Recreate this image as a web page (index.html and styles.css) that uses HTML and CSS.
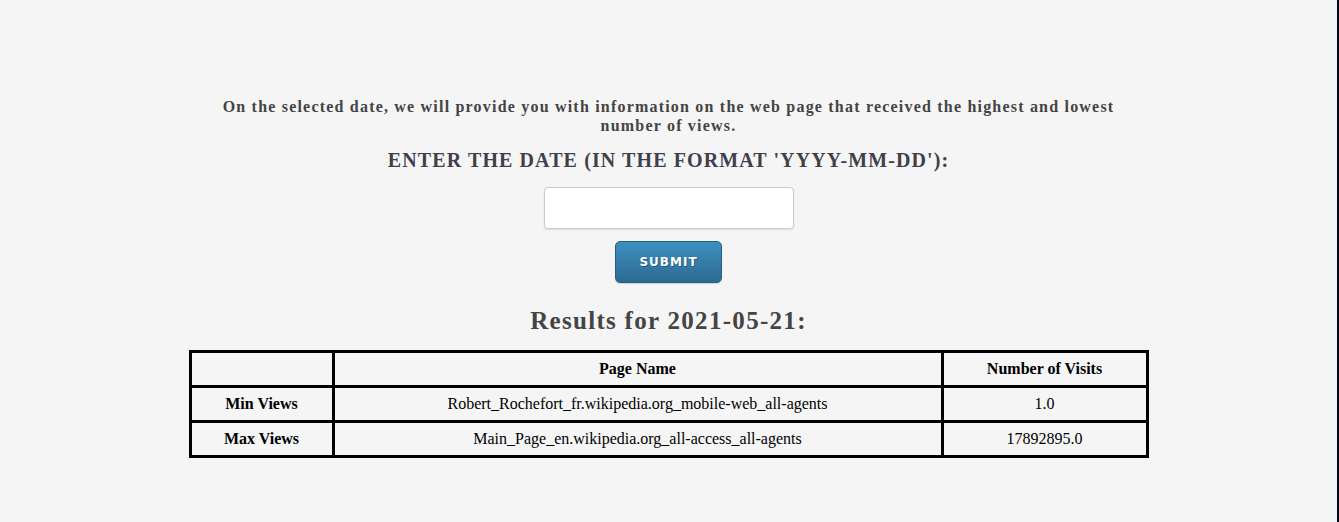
FILE: index.html
```html
<!DOCTYPE html>
<html lang="en">
<head>
<meta charset="utf-8">
<title>Page Views</title>
<link rel="stylesheet" href="styles.css">
</head>
<body>
<div class="page">
  <main class="container">
    <p class="intro">On the selected date, we will provide you with information on the web page that received the highest and lowest number of views.</p>
    <form class="date-form">
      <label class="date-label" for="date">Enter the date (in the format 'YYYY-MM-DD'):</label>
      <input class="date-input" id="date" type="text">
      <button class="submit-btn" type="button">Submit</button>
    </form>
    <h2 class="results-title">Results for 2021-05-21:</h2>
    <table class="results">
      <tr>
        <th class="c1"></th>
        <th class="c2">Page Name</th>
        <th class="c3">Number of Visits</th>
      </tr>
      <tr>
        <th>Min Views</th>
        <td>Robert_Rochefort_fr.wikipedia.org_mobile-web_all-agents</td>
        <td>1.0</td>
      </tr>
      <tr>
        <th>Max Views</th>
        <td>Main_Page_en.wikipedia.org_all-access_all-agents</td>
        <td>17892895.0</td>
      </tr>
    </table>
  </main>
</div>
</body>
</html>
```
FILE: styles.css
```css
html {
  background: #07071a;
  height: 100%;
}
body {
  margin: 0;
  height: 100%;
  width: calc(100% - 2px);
  background: #f5f5f5;
  font-family: "Liberation Serif", "Times New Roman", serif;
}
.page {
  padding-top: 97px;
}
.container {
  width: 960px;
  margin: 0 auto;
  text-align: center;
}
.intro {
  margin: 0 30px;
  font-size: 16px;
  line-height: 19px;
  font-weight: bold;
  letter-spacing: 1.2px;
  color: #444;
}
.date-form {
  display: flex;
  flex-direction: column;
  align-items: center;
}
.date-label {
  margin-top: 13px;
  font-size: 20px;
  line-height: 24px;
  font-weight: bold;
  letter-spacing: 1.1px;
  text-transform: uppercase;
  color: #40404a;
}
.date-input {
  margin-top: 15px;
  width: 250px;
  height: 42px;
  box-sizing: border-box;
  border: 1px solid #ccc;
  border-radius: 4px;
  background: #fff;
  box-shadow: 0 1px 2px rgba(0,0,0,0.1);
}
.submit-btn {
  margin-top: 12px;
  width: 107px;
  height: 42px;
  border: 1px solid #2a5f82;
  border-radius: 5px;
  background: linear-gradient(#3d8fbe, #2c6b93);
  color: #fff;
  font-family: "DejaVu Sans", Verdana, sans-serif;
  font-weight: bold;
  font-size: 12px;
  letter-spacing: 1px;
  text-transform: uppercase;
  text-shadow: 1px 1px 0 rgba(0,0,0,0.3);
  box-shadow: 0 1px 1px rgba(0,0,0,0.15);
}
.results-title {
  margin: 23px 0 15px;
  font-size: 25px;
  line-height: 29px;
  font-weight: bold;
  letter-spacing: 1.3px;
  color: #444;
}
.results {
  width: 960px;
  border-collapse: collapse;
  border: 3px solid #000;
  font-size: 16px;
  color: #000;
}
.results th, .results td {
  border: 3px solid #000;
  height: 30px;
  padding: 1px 8px;
  text-align: center;
}
.c1 { width: 124px; }
.c3 { width: 186px; }
```
